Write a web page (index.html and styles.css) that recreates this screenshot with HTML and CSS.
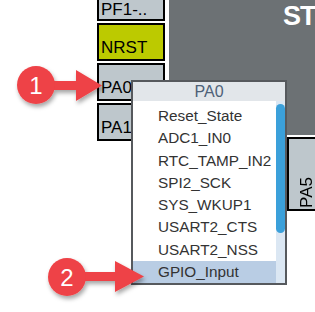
FILE: index.html
```html
<!DOCTYPE html>
<html lang="en">
<head>
    <meta charset="UTF-8">
    <title>Pin PA0</title>
    <link rel="stylesheet" href="styles.css">
</head>
<body>
    <div class="stage">
        <div class="board">
            <div class="pins-left">
                <div class="pin pin-first">PF1-..</div>
                <div class="pin pin-reset">NRST</div>
                <div class="pin">PA0</div>
                <div class="pin">PA1</div>
            </div>
            <div class="chip-side">
                <div class="chip"><span class="chip-name">ST</span></div>
                <div class="pins-bottom">
                    <div class="pin pin-vert"><span>PA5</span></div>
                </div>
            </div>
        </div>

        <div class="popup">
            <div class="popup-head">PA0</div>
            <div class="popup-body">
                <ul class="options">
                    <li class="option">Reset_State</li>
                    <li class="option">ADC1_IN0</li>
                    <li class="option">RTC_TAMP_IN2</li>
                    <li class="option">SPI2_SCK</li>
                    <li class="option">SYS_WKUP1</li>
                    <li class="option">USART2_CTS</li>
                    <li class="option">USART2_NSS</li>
                    <li class="option is-selected">GPIO_Input</li>
                </ul>
                <div class="scroll"><div class="scroll-thumb"></div></div>
            </div>
        </div>

        <svg class="marks" viewBox="0 0 315 312" width="315" height="312">
            <defs>
                <filter id="shade" x="-30%" y="-30%" width="160%" height="170%">
                    <feDropShadow dx="1.5" dy="3" stdDeviation="2" flood-color="#000" flood-opacity="0.35"/>
                </filter>
            </defs>
            <g class="mark" filter="url(#shade)">
                <rect x="50" y="81" width="28" height="9"/>
                <polygon points="76,70 102,85.5 76,101"/>
                <circle cx="36" cy="85" r="19"/>
            </g>
            <g class="mark" filter="url(#shade)">
                <rect x="82" y="272" width="35" height="9"/>
                <polygon points="115,261 144,276.5 115,292"/>
                <circle cx="67" cy="277" r="19"/>
            </g>
            <text class="mark-num" x="36" y="93.5">1</text>
            <text class="mark-num" x="67" y="285.5">2</text>
        </svg>
    </div>
</body>
</html>
```

FILE: styles.css
```css
body {
    margin: 0;
    background-color: #fff;
    font-family: "Liberation Sans", Arial, sans-serif;
}
.stage {
    position: relative;
    width: 315px;
    height: 312px;
    overflow: hidden;
}
.board {
    display: flex;
    gap: 4px;
    padding-left: 97px;
}
.pins-left {
    width: 68px;
    flex-shrink: 0;
    display: flex;
    flex-direction: column;
    gap: 2px;
}
.pin {
    box-sizing: border-box;
    height: 38px;
    border: 2px solid #000;
    background-color: #bec7cc;
    display: flex;
    align-items: flex-end;
    padding: 0 0 1px 2px;
    font-size: 17px;
    line-height: 20px;
    color: #000;
    white-space: nowrap;
}
.pin-first {
    height: 21px;
    border-top: none;
    align-items: center;
    padding-bottom: 0;
}
.pin-reset {
    background-color: #bcca00;
}
.chip-side {
    flex: 1;
    min-width: 0;
    display: flex;
    flex-direction: column;
    gap: 2px;
}
.chip {
    height: 135px;
    background-color: #6c7174;
    padding: 2px 0 0 114px;
    box-sizing: border-box;
    white-space: nowrap;
}
.chip-name {
    color: #fff;
    font-weight: bold;
    font-size: 27px;
    line-height: 28px;
    letter-spacing: -1px;
}
.pins-bottom {
    display: flex;
    padding-left: 118px;
}
.pin-vert {
    width: 44px;
    height: 74px;
    padding: 0 0 1px 11px;
    flex-shrink: 0;
}
.pin-vert span {
    writing-mode: vertical-rl;
    transform: rotate(180deg);
    line-height: 14px;
}
.popup {
    position: absolute;
    left: 131px;
    top: 80px;
    width: 156px;
    height: 205px;
    box-sizing: border-box;
    border: 2px solid #56595d;
    background-color: #fff;
    display: flex;
    flex-direction: column;
}
.popup-head {
    height: 19px;
    background-color: #e2e6ea;
    text-align: center;
    font-size: 16px;
    line-height: 19px;
    color: #4e6178;
}
.popup-body {
    flex: 1;
    display: flex;
    min-height: 0;
}
.options {
    flex: 1;
    list-style: none;
    margin: 0;
    padding: 4px 0 0 0;
}
.option {
    height: 22.25px;
    line-height: 22.25px;
    padding-left: 25px;
    font-size: 15.3px;
    color: #333;
    white-space: nowrap;
}
.option.is-selected {
    background-color: #b9cde4;
}
.scroll {
    width: 9px;
    background-color: #dbe7f3;
    padding-top: 3px;
}
.scroll-thumb {
    height: 129px;
    border-radius: 4.5px;
    background-color: #3ba0da;
}
.marks {
    position: absolute;
    left: 0;
    top: 0;
    pointer-events: none;
}
.mark {
    fill: #ee4246;
}
.mark-num {
    font-family: "Liberation Sans", Arial, sans-serif;
    font-size: 24px;
    fill: #fff;
    text-anchor: middle;
}
```
